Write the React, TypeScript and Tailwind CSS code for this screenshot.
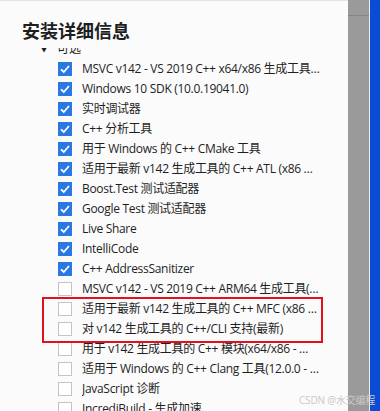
import React from "react";

type Item = { label: string; checked: boolean };

const items: Item[] = [
  { label: "MSVC v142 - VS 2019 C++ x64/x86 生成工具(最新)", checked: true },
  { label: "Windows 10 SDK (10.0.19041.0)", checked: true },
  { label: "实时调试器", checked: true },
  { label: "C++ 分析工具", checked: true },
  { label: "用于 Windows 的 C++ CMake 工具", checked: true },
  { label: "适用于最新 v142 生成工具的 C++ ATL (x86 和 x64)", checked: true },
  { label: "Boost.Test 测试适配器", checked: true },
  { label: "Google Test 测试适配器", checked: true },
  { label: "Live Share", checked: true },
  { label: "IntelliCode", checked: true },
  { label: "C++ AddressSanitizer", checked: true },
  { label: "MSVC v142 - VS 2019 C++ ARM64 生成工具(最新)", checked: false },
  { label: "适用于最新 v142 生成工具的 C++ MFC (x86 和 x64)", checked: false },
  { label: "对 v142 生成工具的 C++/CLI 支持(最新)", checked: false },
  { label: "用于 v142 生成工具的 C++ 模块(x64/x86 - 实验性)", checked: false },
  { label: "适用于 Windows 的 C++ Clang 工具(12.0.0 - x64/x86)", checked: false },
  { label: "JavaScript 诊断", checked: false },
  { label: "IncrediBuild - 生成加速", checked: false },
];

const font = {
  fontFamily: '"Segoe UI", "Open Sans", "Noto Sans CJK SC", sans-serif',
};

function Checkbox({ checked }: { checked: boolean }) {
  if (checked) {
    return (
      <span className="flex h-[14px] w-[14px] shrink-0 items-center justify-center bg-[#2a78e4]">
        <svg width="12" height="12" viewBox="0 0 12 12" fill="none">
          <path d="M2 6.3 L4.8 9 L10 3" stroke="white" strokeWidth="1.8" />
        </svg>
      </span>
    );
  }
  return <span className="h-[14px] w-[14px] shrink-0 border border-[#c4c4c4] bg-white" />;
}

export default function App() {
  return (
    <div className="relative flex h-[411px] w-[380px] overflow-hidden bg-white" style={font}>
      <div className="relative flex w-[348px] flex-col border-t border-[#e4e4e4] bg-[#fbfbfb]">
        <h1 className="ml-[22px] mt-[19px] text-[18px] font-semibold leading-[22px] text-[#1e1e1e]">
          安装详细信息
        </h1>
        <div className="mt-[6px] flex-1 overflow-hidden">
          <div className="-mt-[9px] flex h-[20px] items-center text-[12px] text-[#1e1e1e]">
            <span className="ml-[40px] w-[17px] text-[8px] leading-none">▼</span>
            <span>可选</span>
          </div>
          {items.map((it) => (
            <div key={it.label} className="flex h-[20px] items-center pl-[58px]">
              <Checkbox checked={it.checked} />
              <span className="ml-[10px] w-[238px] truncate text-[12px] tracking-[-0.3px] text-[#1e1e1e]">
                {it.label}
              </span>
            </div>
          ))}
        </div>
        <div className="pointer-events-none absolute left-[42px] top-[296px] h-[46px] w-[281px] border-2 border-[#e3111b]" />
      </div>
      <div className="w-[21px] bg-[#9a9a9a]">
        <div className="mt-[15px] h-px bg-[#858585]" />
      </div>
      <div className="w-px bg-[#f0f0f0]" />
      <div className="flex-1 bg-[#0a4cd4]" />
      <div className="pointer-events-none absolute left-[299px] top-[393px] whitespace-nowrap text-[10px] tracking-[-0.2px] text-[#c9c9c9]">
        CSDN @水交编程
      </div>
    </div>
  );
}
